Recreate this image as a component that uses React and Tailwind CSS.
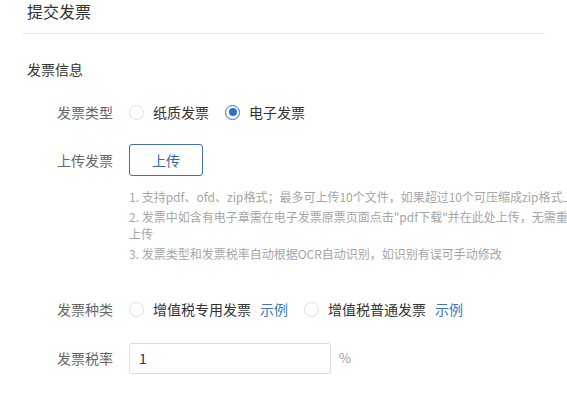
const font = { fontFamily: '"Noto Sans CJK SC", "Liberation Sans", sans-serif' }

const Radio = ({ checked, label, link }) => (
  <label className="flex items-center cursor-pointer">
    <span
      className={
        checked
          ? 'w-[15px] h-[15px] rounded-full border border-[#2b6fd3] flex items-center justify-center'
          : 'w-[15px] h-[15px] rounded-full border border-[#dcdfe6] bg-white'
      }
    >
      {checked && <span className="w-[8px] h-[8px] rounded-full bg-[#2b6fd3]" />}
    </span>
    <span className="ml-[9px] text-[14px] text-[#333]">{label}</span>
    {link && <span className="ml-[9px] text-[14px] text-[#3a78c3]">{link}</span>}
  </label>
)

const Row = ({ label, children, className = '' }) => (
  <div className={`flex items-center h-[32px] ${className}`}>
    <div className="w-[56px] text-[14px] text-[#666] whitespace-nowrap">{label}</div>
    <div className="ml-[16px] flex items-center">{children}</div>
  </div>
)

export default function App() {
  return (
    <div className="w-[567px] h-[397px] overflow-hidden bg-white" style={font}>
      <div className="mx-[22px] h-[34px] pt-[1px] border-b border-[#ebebeb]">
        <h2 className="pl-[5px] text-[16px] leading-[20px] text-[#333]">提交发票</h2>
      </div>

      <div className="pl-[27px] mt-[25px] text-[14px] leading-[20px] text-[#333]">发票信息</div>

      <div className="pl-[57px]">
        <Row label="发票类型" className="mt-[17px]">
          <div className="flex items-center gap-[16px]">
            <Radio label="纸质发票" />
            <Radio checked label="电子发票" />
          </div>
        </Row>

        <Row label="上传发票" className="mt-[16px]">
          <button className="w-[74px] h-[32px] rounded-[3px] border border-[#3d72b4] text-[14px] text-[#2e68b0] bg-white">
            上传
          </button>
        </Row>

        <ul className="ml-[72px] mt-[12px] text-[12px] leading-[17px] text-[#a6a6a6] space-y-[3px]">
          <li className="whitespace-nowrap">1. 支持pdf、ofd、zip格式；最多可上传10个文件，如果超过10个可压缩成zip格式上传</li>
          <li className="whitespace-nowrap">
            2. 发票中如含有电子章需在电子发票原票页面点击"pdf下载"并在此处上传，无需重复
            <br />
            上传
          </li>
          <li className="whitespace-nowrap">3. 发票类型和发票税率自动根据OCR自动识别，如识别有误可手动修改</li>
        </ul>

        <Row label="发票种类" className="mt-[31px]">
          <div className="flex items-center gap-[16px]">
            <Radio label="增值税专用发票" link="示例" />
            <Radio label="增值税普通发票" link="示例" />
          </div>
        </Row>

        <Row label="发票税率" className="mt-[17px]">
          <input
            defaultValue="1"
            className="w-[202px] h-[31px] rounded-[3px] border border-[#dcdcdc] px-[9px] text-[14px] text-[#333] outline-none"
          />
          <span className="ml-[8px] text-[13px] text-[#999]">%</span>
        </Row>
      </div>
    </div>
  )
}
